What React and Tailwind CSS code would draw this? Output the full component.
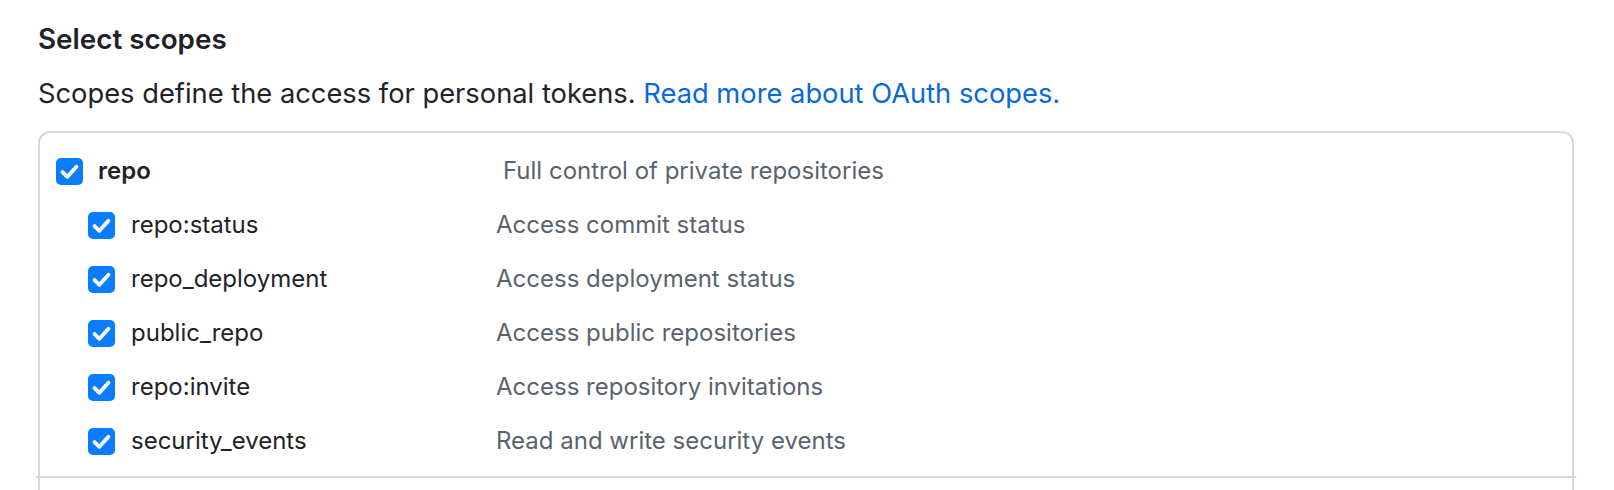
import React from 'react';

const SCOPES = [
  { id: 'repo:status', desc: 'Access commit status' },
  { id: 'repo_deployment', desc: 'Access deployment status' },
  { id: 'public_repo', desc: 'Access public repositories' },
  { id: 'repo:invite', desc: 'Access repository invitations' },
  { id: 'security_events', desc: 'Read and write security events' },
];

function Check() {
  return (
    <span className="w-[27px] h-[27px] shrink-0 rounded-[5px] bg-[#0a7cff] flex items-center justify-center">
      <svg viewBox="0 0 28 28" className="w-[27px] h-[27px]">
        <path d="M6.8 14.6l5 4.9L21.2 9" fill="none" stroke="#fff" strokeWidth="4" strokeLinecap="round" strokeLinejoin="round" />
      </svg>
    </span>
  );
}

export default function App() {
  return (
    <div className="w-full h-[490px] overflow-hidden bg-white pl-[38px] pr-[40px] font-['Inter','Liberation_Sans',sans-serif] text-[#1f2328]">
      {/* Heading */}
      <h3 className="pt-[23px] text-[27.8px] leading-[33px] font-semibold">Select scopes</h3>
      <p className="mt-[18px] text-[27.3px] leading-[40px]">
        Scopes define the access for personal tokens.{' '}
        <a className="text-[#0969da]">Read more about OAuth scopes.</a>
      </p>

      {/* Scope table */}
      <div className="mt-[17px] border-2 border-b-0 border-[#d1d9e0] rounded-t-[12px]">
        <div className="pt-[11px] pb-[8px] pl-[16px]">
          <label className="h-[54px] flex items-center">
            <Check />
            <span className="ml-[15px] w-[405px] text-[24px] font-semibold">repo</span>
            <span className="text-[24px] text-[#59636e]">Full control of private repositories</span>
          </label>
          {SCOPES.map((s) => (
            <label key={s.id} className="h-[54px] flex items-center pl-[32px]">
              <Check />
              <span className="ml-[16px] w-[365px] text-[24px]">{s.id}</span>
              <span className="text-[24px] text-[#59636e]">{s.desc}</span>
            </label>
          ))}
        </div>
        <div className="-mx-[4px] h-[2px] bg-[#d1d9e0]" />
        <div className="h-[40px]" />
      </div>
    </div>
  );
}
